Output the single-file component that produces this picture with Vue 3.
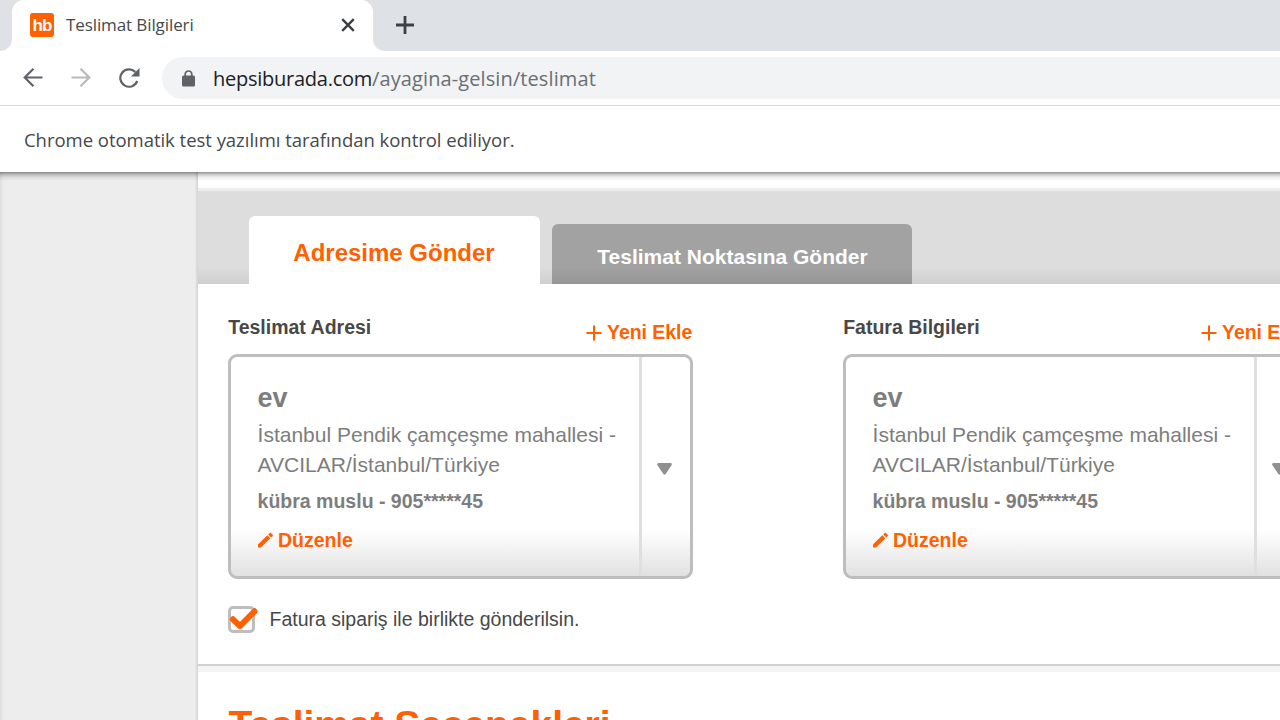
<script setup>
const addresses = [
  { id: 'delivery', heading: 'Teslimat Adresi' },
  { id: 'invoice', heading: 'Fatura Bilgileri' },
]
</script>

<template>
  <div class="window">
    <header class="tabstrip">
      <div class="left-cap"></div>
      <div class="browser-tab">
        <span class="favicon">hb</span>
        <span class="tab-title">Teslimat Bilgileri</span>
        <svg class="close" width="14" height="14" viewBox="0 0 14 14"><path d="M1.2 1.2 12.8 12.8M12.8 1.2 1.2 12.8" /></svg>
      </div>
      <div class="right-strip">
        <svg width="18" height="18" viewBox="0 0 18 18"><path d="M9 0v18M0 9h18" /></svg>
      </div>
    </header>

    <div class="toolbar">
      <svg class="nav back" width="20" height="20" viewBox="0 0 20 20"><path d="M19.500 9.500H2M10.500 .8 1.700 9.500l8.800 8.700" /></svg>
      <svg class="nav forward" width="20" height="20" viewBox="0 0 20 20"><path d="M.5 9.500h17.500M9.500 .8l8.800 8.700-8.800 8.700" /></svg>
      <svg class="nav reload" width="21" height="20" viewBox="0 0 21 20">
        <path d="M18.200 13A8.700 8.700 0 1 1 16.300 4" />
        <path class="solid" d="M20.500 0v8.600h-8.600z" />
      </svg>
      <div class="omnibox">
        <svg class="lock" width="13" height="17" viewBox="0 0 13 17">
          <rect x="0" y="5.500" width="13" height="11" rx="1.600" />
          <path d="M3.200 6.500V4.300a3.300 3.300 0 0 1 6.600 0v2.200" />
        </svg>
        <span class="url"><span class="host">hepsiburada.com</span>/ayagina-gelsin/teslimat</span>
      </div>
    </div>

    <div class="infobar"><span>Chrome otomatik test yazılımı tarafından kontrol ediliyor.</span></div>

    <main class="viewport">
      <aside class="gutter"></aside>
      <section class="page">
        <div class="top-gap"></div>
        <nav class="tabs">
          <div class="tab active">Adresime Gönder</div>
          <div class="tab idle">Teslimat Noktasına Gönder</div>
        </nav>

        <div class="columns">
          <div v-for="a in addresses" :key="a.id" class="column">
            <div class="col-head">
              <h3>{{ a.heading }}</h3>
              <a class="add">
                <svg width="16" height="16" viewBox="0 0 16 16"><path d="M8 .5v15M.5 8h15" /></svg>
                <span>Yeni Ekle</span>
              </a>
            </div>
            <div class="card">
              <div class="info">
                <h4>ev</h4>
                <p class="street">İstanbul Pendik çamçeşme mahallesi -<br />AVCILAR/İstanbul/Türkiye</p>
                <p class="person">kübra muslu - 905*****45</p>
                <a class="edit">
                  <svg width="15" height="16" viewBox="0 0 15 16">
                    <path d="M0 12.600 9.300 3.300l3 3L3 15.600H0z" />
                    <path d="M10.200 2.400 11.700.9q.6-.6 1.200 0l1.800 1.800q.6.600 0 1.200l-1.500 1.500z" />
                  </svg>
                  <span>Düzenle</span>
                </a>
              </div>
              <div class="picker">
                <svg width="15" height="12" viewBox="0 0 15 12"><path d="M1.600 1.500h11.800L7.500 10.200z" /></svg>
              </div>
            </div>
          </div>
        </div>

        <div class="check-row">
          <span class="box">
            <svg width="30" height="27" viewBox="0 0 30 27"><path d="M5 13.300 12 20 26.500 5.300" /></svg>
          </span>
          <span>Fatura sipariş ile birlikte gönderilsin.</span>
        </div>
        <div class="divider"></div>
        <h2>Teslimat Seçenekleri</h2>
      </section>
      <div class="edge-shadow"></div>
    </main>
  </div>
</template>

<style>
html, body { margin: 0; overflow: hidden; }
</style>

<style scoped>
.window {
  width: 1280px;
  height: 720px;
  overflow: hidden;
  background: #fff;
  display: flex;
  flex-direction: column;
  font-family: "Liberation Sans", Arial, sans-serif;
}
h2, h3, h4, p { margin: 0; }
svg { display: block; flex: none; fill: none; }

.tabstrip { display: flex; height: 51px; flex: none; }
.left-cap { width: 12px; background: #dee1e6; border-bottom-right-radius: 12px; }
.browser-tab {
  width: 361px;
  box-sizing: border-box;
  padding: 0 18px 1px;
  display: flex;
  align-items: center;
  position: relative;
  background: #fff;
}
.browser-tab::before, .browser-tab::after {
  content: "";
  position: absolute;
  top: 0;
  width: 12px;
  height: 12px;
}
.browser-tab::before { left: 0; background: radial-gradient(circle at 100% 100%, #fff 11.5px, #dee1e6 12.5px); }
.browser-tab::after { right: 0; background: radial-gradient(circle at 0 100%, #fff 11.5px, #dee1e6 12.5px); }
.favicon {
  width: 24px;
  height: 24px;
  border-radius: 3px;
  background: #ff6000;
  color: #fff;
  font: bold 17px/25px "Liberation Sans", sans-serif;
  letter-spacing: -0.8px;
  text-align: center;
}
.tab-title {
  margin-left: 12px;
  font: 17px/24px "Open Sans", sans-serif;
  letter-spacing: -0.1px;
  color: #45494d;
}
.close { margin-left: auto; stroke: #3c4043; stroke-width: 2.4; }
.right-strip {
  flex: 1;
  background: #dee1e6;
  border-bottom-left-radius: 12px;
  padding: 16px 0 0 23px;
}
.right-strip svg { stroke: #3c4043; stroke-width: 2.8; }

.toolbar {
  height: 54px;
  flex: none;
  display: flex;
  align-items: center;
  padding-left: 23px;
  border-bottom: 1px solid #d8d9dc;
}
.nav { stroke: #5f6368; stroke-width: 2.2; }
.forward { margin-left: 28px; stroke: #bababc; }
.reload { margin-left: 28px; }
.reload .solid { fill: #5f6368; stroke: none; }
.omnibox {
  flex: 1;
  height: 42px;
  margin-left: 22px;
  padding-left: 20px;
  display: flex;
  align-items: center;
  border-radius: 21px 0 0 21px;
  background: #f1f3f4;
}
.lock rect { fill: #5f6368; }
.lock path { stroke: #5f6368; stroke-width: 1.7; }
.url {
  margin-left: 18px;
  padding-top: 1px;
  font: 20px/30px "Open Sans", sans-serif;
  letter-spacing: 0.1px;
  color: #6b6f73;
}
.host { color: #202124; letter-spacing: -0.25px; }

.infobar {
  height: 66px;
  flex: none;
  display: flex;
  align-items: center;
  padding: 1px 0 0 24px;
  box-sizing: border-box;
  font: 18.5px/26px "Open Sans", sans-serif;
  letter-spacing: -0.03px;
  color: #45484c;
}

.viewport { flex: 1; display: flex; position: relative; min-height: 0; overflow: hidden; }
.gutter {
  width: 198px;
  box-sizing: border-box;
  flex: none;
  background: linear-gradient(90deg, #dedede 0, #ededed 4px, #ededed 195px, #e2e2e2 196px, #d2d2d2 198px);
}
.page { flex: 1; min-width: 0; background: #fff; }
.edge-shadow {
  position: absolute;
  inset: 0 0 auto;
  height: 9px;
  background: linear-gradient(rgba(0, 0, 0, 0.42) 0, rgba(0, 0, 0, 0.36) 1px, rgba(0, 0, 0, 0.24) 2px, rgba(0, 0, 0, 0.08) 5px, transparent);
}
.top-gap { height: 16px; border-bottom: 3px solid #ededed; }
.tabs {
  height: 93px;
  display: flex;
  align-items: flex-end;
  gap: 12px;
  padding-left: 51px;
  background: linear-gradient(#dddddd 0, #dddddd 76px, #cfcfcf 93px);
}
.tab {
  box-sizing: border-box;
  border-radius: 6px 6px 0 0;
  font-weight: bold;
  text-align: center;
}
.active { width: 291px; height: 68px; background: #fff; color: #ff6000; font-size: 24px; line-height: 73px; padding-right: 1px; }
.idle {
  width: 360px;
  height: 60px;
  padding-left: 1px;
  background: linear-gradient(#a2a2a2 0, #a2a2a2 43px, #969696 60px);
  color: #fff;
  font-size: 21px;
  line-height: 66px;
}

.columns { display: flex; gap: 150px; padding-left: 30px; width: 1080px; }
.column { width: 465px; flex: none; }
.col-head {
  height: 70px;
  display: flex;
  justify-content: space-between;
  font-size: 19.5px;
  font-weight: bold;
  line-height: 24px;
}
h3 { font-size: inherit; padding: 31px 0 0 0.2px; color: #484848; }
.add { display: flex; gap: 5px; padding: 36px 0.8px 0 0; color: #ff6000; }
.add span { letter-spacing: -0.05px; }
.add svg { margin-top: 5px; stroke: #ff6000; stroke-width: 2; }
.card {
  height: 225px;
  box-sizing: border-box;
  border: 3px solid #bebebe;
  border-radius: 9px;
  display: flex;
  color: #7d7d7d;
  background: linear-gradient(transparent 0, transparent 173px, #e1e1e1 219px);
}
.info { width: 408px; box-sizing: border-box; padding: 26px 0 0 26.6px; white-space: nowrap; }
h4 { font-size: 27px; line-height: 31px; }
.street { margin-top: 6px; font-size: 21px; line-height: 30px; }
.person { margin-top: 9px; font-size: 19.5px; line-height: 24px; font-weight: bold; }
.edit {
  margin-top: 15px;
  display: flex;
  align-items: center;
  gap: 5.4px;
  font-size: 19.5px;
  line-height: 24px;
  font-weight: bold;
  color: #ff6000;
}
.edit svg { fill: #ff6000; }
.picker {
  flex: 1;
  border-left: 3px solid #dfdfdf;
  display: flex;
  justify-content: center;
  padding: 106px 3px 0 0;
}
.picker svg { fill: #909090; stroke: #909090; stroke-width: 2.8; stroke-linejoin: round; }

.check-row {
  height: 85px;
  box-sizing: border-box;
  padding: 27px 0 0 30px;
  display: flex;
  font-size: 19.5px;
  line-height: 26px;
  color: #484848;
}
.box {
  width: 27px;
  height: 27px;
  margin-right: 14.5px;
  box-sizing: border-box;
  border: 3px solid #bebebe;
  border-radius: 5px;
  position: relative;
}
.box svg { position: absolute; left: -3px; top: -3px; stroke: #ff6000; stroke-width: 6; stroke-linecap: round; stroke-linejoin: round; overflow: visible; }
.divider { height: 6px; border-top: 2px solid #d0d0d0; background: #f4f4f4; }
h2 { padding: 30px 0 0 30.5px; font-size: 39px; line-height: 45px; color: #ff6000; letter-spacing: -0.05px; }
</style>
